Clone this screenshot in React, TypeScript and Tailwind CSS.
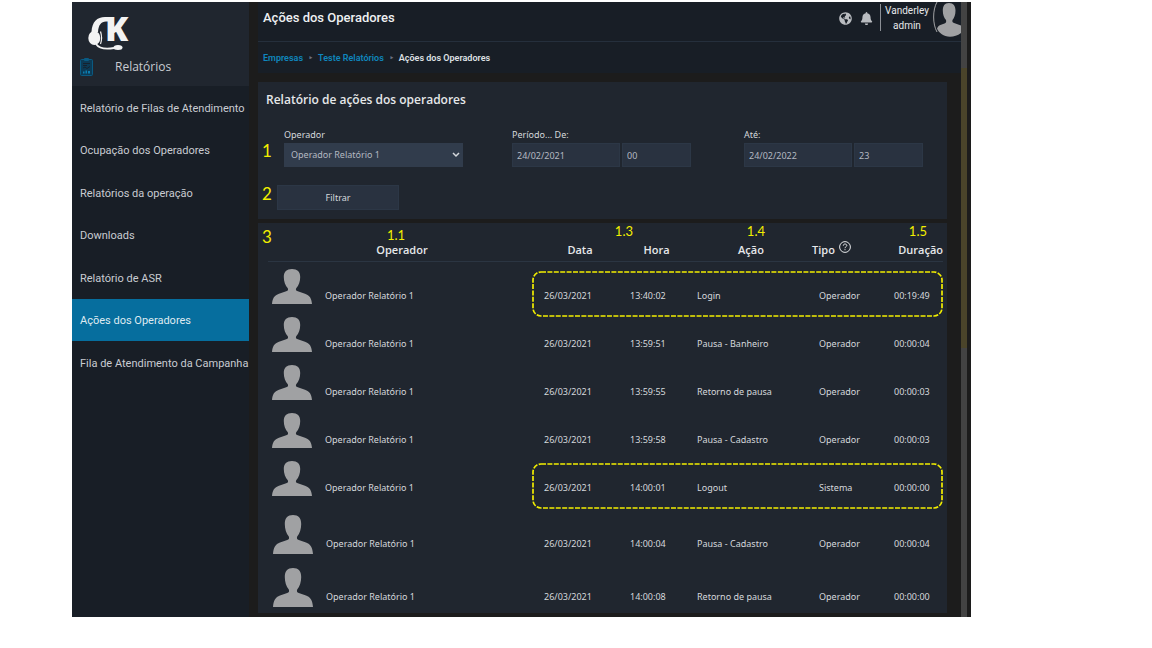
import { clsx } from 'clsx'
import React from 'react'
import { FaBell, FaGlobeAmericas } from 'react-icons/fa'

const menuItems = [
  'Relatório de Filas de Atendimento',
  'Ocupação dos Operadores',
  'Relatórios da operação',
  'Downloads',
  'Relatório de ASR',
  'Ações dos Operadores',
  'Fila de Atendimento da Campanha',
]

const ACTIVE_ITEM = 'Ações dos Operadores'

interface Action {
  time: string
  action: string
  type: string
  duration: string
  highlighted?: boolean
  tall?: boolean
}

const actions: Action[] = [
  { time: '13:40:02', action: 'Login', type: 'Operador', duration: '00:19:49', highlighted: true },
  { time: '13:59:51', action: 'Pausa - Banheiro', type: 'Operador', duration: '00:00:04' },
  { time: '13:59:55', action: 'Retorno de pausa', type: 'Operador', duration: '00:00:03' },
  { time: '13:59:58', action: 'Pausa - Cadastro', type: 'Operador', duration: '00:00:03' },
  { time: '14:00:01', action: 'Logout', type: 'Sistema', duration: '00:00:00', highlighted: true },
  { time: '14:00:04', action: 'Pausa - Cadastro', type: 'Operador', duration: '00:00:04', tall: true },
  { time: '14:00:08', action: 'Retorno de pausa', type: 'Operador', duration: '00:00:00', tall: true },
]

function Person({ className }: { className?: string }) {
  return (
    <svg viewBox="0 0 40 36" preserveAspectRatio="none" className={className} aria-hidden="true">
      <path
        d="M20 0c5.400 0 8.200 3 8.200 8.200 0 4.400-1.400 8.800-4 11.600-.7 1.800-.2 2.600 1.600 3.200l7.200 2.400c4.600 1.600 6.600 4.600 7 10.600H0c.4-6 2.400-9 7-10.600l7.200-2.400c1.800-.6 2.300-1.400 1.600-3.200-2.600-2.800-4-7.200-4-11.600C11.800 3 14.600 0 20 0z"
        fill="#a0a1a3"
      />
    </svg>
  )
}

function Logo() {
  return (
    <svg viewBox="0 0 46 36" className="h-9 w-[46px] overflow-visible" role="img" aria-label="K">
      <path d="M3.500 18C4 8 9 3 17 3h6v4.500h-5C13 7.500 10.500 11 10 18z" fill="#f3f3f3" />
      <ellipse cx="6.300" cy="24" rx="6" ry="7" fill="#f3f3f3" />
      <path d="M12.500 17.500c1.200 3.500 1.200 9 0 12.500" fill="none" stroke="#f3f3f3" strokeWidth="1.200" />
      <path d="M8 30c3 4.500 9 5.500 18 4" fill="none" stroke="#f3f3f3" strokeWidth="1.800" />
      <ellipse cx="30" cy="33.500" rx="4.500" ry="2.500" fill="#f3f3f3" />
      <text x="17" y="27" fontSize="34" fontWeight="900" fontFamily="Noto Sans" fill="#f3f3f3">
        K
      </text>
    </svg>
  )
}

function ClipboardIcon() {
  return (
    <svg viewBox="0 0 13 18" className="h-[18px] w-[13px]" aria-hidden="true">
      <rect x="0.500" y="1.500" width="12" height="16" rx="1" fill="#0c3a55" stroke="#0a5a82" />
      <rect x="4" y="0" width="5" height="3" rx="1" fill="#0a5a82" />
      <path d="M3 5.500h7M3 7.500h4M3 10l2-1 2 1.500 3-2" fill="none" stroke="#16222e" />
      <path d="M3 15.500v-2h1.500v2zM5.500 15.500v-3H7v3zM8 15.500v-2.500h2v2.500z" fill="#0c7db0" />
    </svg>
  )
}

function Sidebar() {
  return (
    <aside className="w-[177px] shrink-0 bg-[#181e26] font-['Roboto',sans-serif] text-[11px] text-[#c9ccd2]">
      <div className="h-[84px] bg-[#20262f] px-2 pt-3 font-['Open_Sans',sans-serif]">
        <div className="ml-2">
          <Logo />
        </div>
        <div className="mt-2 flex items-center">
          <ClipboardIcon />
          <span className="ml-[22px] text-[12px] leading-4">Relatórios</span>
        </div>
      </div>
      <nav className="grid h-[298px] auto-rows-fr grid-cols-1">
        {menuItems.map((item) => (
          <a
            key={item}
            href="#"
            className={clsx(
              'flex items-center pt-[3px] pl-2 whitespace-nowrap',
              item === ACTIVE_ITEM && 'bg-[#066e9e] text-[#dfeaf1]',
            )}
          >
            {item}
          </a>
        ))}
      </nav>
    </aside>
  )
}

function Header() {
  return (
    <header className="h-[71px] bg-[#181e26] font-['Roboto',sans-serif]">
      <div className="flex h-10 items-start border-b border-[#252f3c] pl-[5px]">
        <h1 className="pt-1 text-[13px] leading-6 font-medium text-[#eef0f2]">
          Ações dos Operadores
        </h1>
        <div className="ml-auto flex items-start text-[10px] text-[#e6e8ea]">
          <button aria-label="Idioma" className="mt-[10px]">
            <FaGlobeAmericas className="size-[13px] text-[#b9bcc0]" />
          </button>
          <button aria-label="Notificações" className="mt-[10px] ml-2">
            <FaBell className="size-[13px] text-[#b9bcc0]" />
          </button>
          <div className="mt-[2px] ml-[7px] h-[27px] w-px bg-[#8b8f95]" />
          <p className="mt-px ml-1 w-[44px] text-center leading-[15px]">
            Vanderley admin
          </p>
          <svg viewBox="0 0 28 35" className="ml-1 h-[35px] w-[28px]" aria-hidden="true">
            <path d="M4 0C-.5 8-.5 22 4 30" fill="none" stroke="#a0a1a3" />
            <path
              d="M16 1c4.500 0 6.500 3 6.500 7.500 0 4-1.200 7.500-3 9.500-.4 1.700 0 2.500 1.500 3l7 2.500V31c-3.500 2.600-7 3.700-11 3.700C10.500 34.700 6 31 4 26.500c.8-2 2.200-3 4-3.700l3.500-1.300c1.500-.6 2-1.600 1.500-3.500-2-2-3.200-5.500-3.200-9.500C9.800 4 11.500 1 16 1z"
              fill="#a0a1a3"
            />
          </svg>
        </div>
      </div>
      <nav className="flex items-center gap-[6px] pl-[5px] text-[9px] leading-8 font-semibold whitespace-nowrap">
        <a href="#" className="text-[#0f86bd]">
          Empresas
        </a>
        <span className="text-[#6b7280]">‣</span>
        <a href="#" className="text-[#0f86bd]">
          Teste Relatórios
        </a>
        <span className="text-[#6b7280]">‣</span>
        <span className="text-[#dfe1e4]">Ações dos Operadores</span>
      </nav>
    </header>
  )
}

function PeriodField({ id, label, date, hour }: { id: string; label: string; date: string; hour: string }) {
  return (
    <div>
      <label htmlFor={id} className="block leading-4 text-[#d5d8dc]">
        {label}
      </label>
      <div className="flex gap-[2px]">
        <input
          id={id}
          defaultValue={date}
          className="h-6 w-[108px] border border-[#2c3746] bg-[#293240] px-1"
        />
        <input
          aria-label={`Hora ${label}`}
          defaultValue={hour}
          className="h-6 w-[69px] border border-[#2c3746] bg-[#293240] px-1"
        />
      </div>
    </div>
  )
}

function Filters() {
  return (
    <section className="relative mt-[9px] h-[137px] bg-[#20262f]">
      <h2 className="pt-2 pl-2 text-[12px] leading-5 font-semibold text-[#e6e8ea]">
        Relatório de ações dos operadores
      </h2>
      <form
        className="font-['Noto_Sans',sans-serif] text-[9px] text-[#b4b9c1]"
        onSubmit={(e) => e.preventDefault()}
      >
        <div className="mt-[17px] grid grid-cols-[228px_232px_1fr] pl-[26px]">
          <div>
            <label htmlFor="operator" className="block leading-4 text-[#d5d8dc]">
              Operador
            </label>
            <div className="relative w-[179px]">
              <select
                id="operator"
                className="h-6 w-full appearance-none bg-[#313c4c] px-[7px]"
              >
                <option>Operador Relatório 1</option>
              </select>
              <svg viewBox="0 0 8 6" className="pointer-events-none absolute top-[9px] right-[3px] h-[6px] w-2">
                <path d="M1 1l3 3 3-3" fill="none" stroke="#d5d8dc" strokeWidth="1.500" />
              </svg>
            </div>
          </div>
          <PeriodField id="from" label="Período... De:" date="24/02/2021" hour="00" />
          <PeriodField id="to" label="Até:" date="24/02/2022" hour="23" />
        </div>
        <button className="mt-[18px] ml-[19px] h-[25px] w-[122px] border border-[#2c3746] bg-[#293240] text-[#d5d8dc]">
          Filtrar
        </button>
      </form>
      <Marker className="top-[59px] left-1 text-[17px] leading-5">1</Marker>
      <Marker className="top-[102px] left-1 text-[17px] leading-5">2</Marker>
    </section>
  )
}

function Marker({ className, children }: { className: string; children: React.ReactNode }) {
  return (
    <span className={clsx("absolute font-['Lato',sans-serif] text-[#f2ee00]", className)}>
      {children}
    </span>
  )
}

function ActionsTable() {
  return (
    <section className="relative mt-1 bg-[#20262f] pr-1 pl-[10px] pb-px">
      <table className="w-full table-fixed text-left font-['Noto_Sans',sans-serif] text-[9px] leading-4 text-[#d5d8dc]">
        <colgroup>
          <col />
          <col className="w-[86px]" />
          <col className="w-[67px]" />
          <col className="w-[122px]" />
          <col className="w-[75px]" />
          <col className="w-[57px]" />
        </colgroup>
        <thead>
          <tr className="h-[38px] border-b border-[#2b3542] text-center align-bottom font-['Open_Sans',sans-serif] text-[11px] leading-[14px] text-[#e6e8ea] *:pb-1 *:font-semibold">
            <th>Operador</th>
            <th className="pl-[2px]">Data</th>
            <th className="pl-[2px]">Hora</th>
            <th className="pl-[2px]">Ação</th>
            <th className="pl-px text-left whitespace-nowrap">
              Tipo
              <svg viewBox="0 0 12 12" className="ml-1 inline size-3 align-[1px]" aria-hidden="true">
                <circle cx="6" cy="6" r="5.400" fill="none" stroke="#e6e8ea" />
                <path d="M4.300 4.700C4.400 3.500 5 3 6 3s1.800.6 1.800 1.500C7.800 5.700 6 5.700 6 7.200M6 8.200v1" fill="none" stroke="#e6e8ea" />
              </svg>
            </th>
            <th className="text-right">Duração</th>
          </tr>
        </thead>
        <tbody>
          {actions.map((row, index) => (
            <tr
              key={row.time}
              className={clsx(
                'relative align-bottom',
                row.tall ? '*:pb-[7px]' : '*:pb-[5px]',
                row.tall ? (index === 5 ? 'h-[58px]' : 'h-[53px]') : 'h-12',
              )}
            >
              <td>
                <div className={clsx('flex items-end gap-[13px]', row.tall ? 'pl-[5px]' : 'pl-1')}>
                  <Person className={row.tall ? '-mb-[2px] h-[39px] w-10' : 'h-[35px] w-10'} />
                  Operador Relatório 1
                </div>
              </td>
              <td className="pl-2">
                26/03/2021
                {row.highlighted && (
                  <svg className="absolute top-[10px] right-0 h-[46px] w-[411px]" aria-hidden="true">
                    <rect
                      x="1"
                      y="1"
                      width="409"
                      height="44"
                      rx="8"
                      fill="none"
                      stroke="#f2ee00"
                      strokeWidth="1.700"
                      strokeDasharray="5 1.400"
                    />
                  </svg>
                )}
              </td>
              <td className="pl-2">{row.time}</td>
              <td className="pl-2">{row.action}</td>
              <td className="pl-2">{row.type}</td>
              <td className="pl-2">{row.duration}</td>
            </tr>
          ))}
        </tbody>
      </table>
      <Marker className="top-1 left-1 text-[17px] leading-5">3</Marker>
      <Marker className="top-[6px] left-[129px] text-[13px] leading-3">1.1</Marker>
      <Marker className="top-[2px] right-[314px] text-[13px] leading-3">1.3</Marker>
      <Marker className="top-[2px] right-[182px] text-[13px] leading-3">1.4</Marker>
      <Marker className="top-[2px] right-5 text-[13px] leading-3">1.5</Marker>
    </section>
  )
}

export default function App() {
  return (
    <div className="min-h-screen bg-white pt-[2px] pr-[181px] pl-[72px] font-['Open_Sans','Noto_Sans',sans-serif]">
      <div className="flex bg-[#1c1c1c] pr-1">
        <Sidebar />
        <main className="ml-[9px] min-w-0 flex-1">
          <Header />
          <div className="mr-[14px] pb-1">
            <Filters />
            <ActionsTable />
          </div>
        </main>
        <div className="w-[6px] bg-[#434343] pt-[66px]">
          <div className="h-[280px] bg-[#4a442a]" />
        </div>
      </div>
    </div>
  )
}
